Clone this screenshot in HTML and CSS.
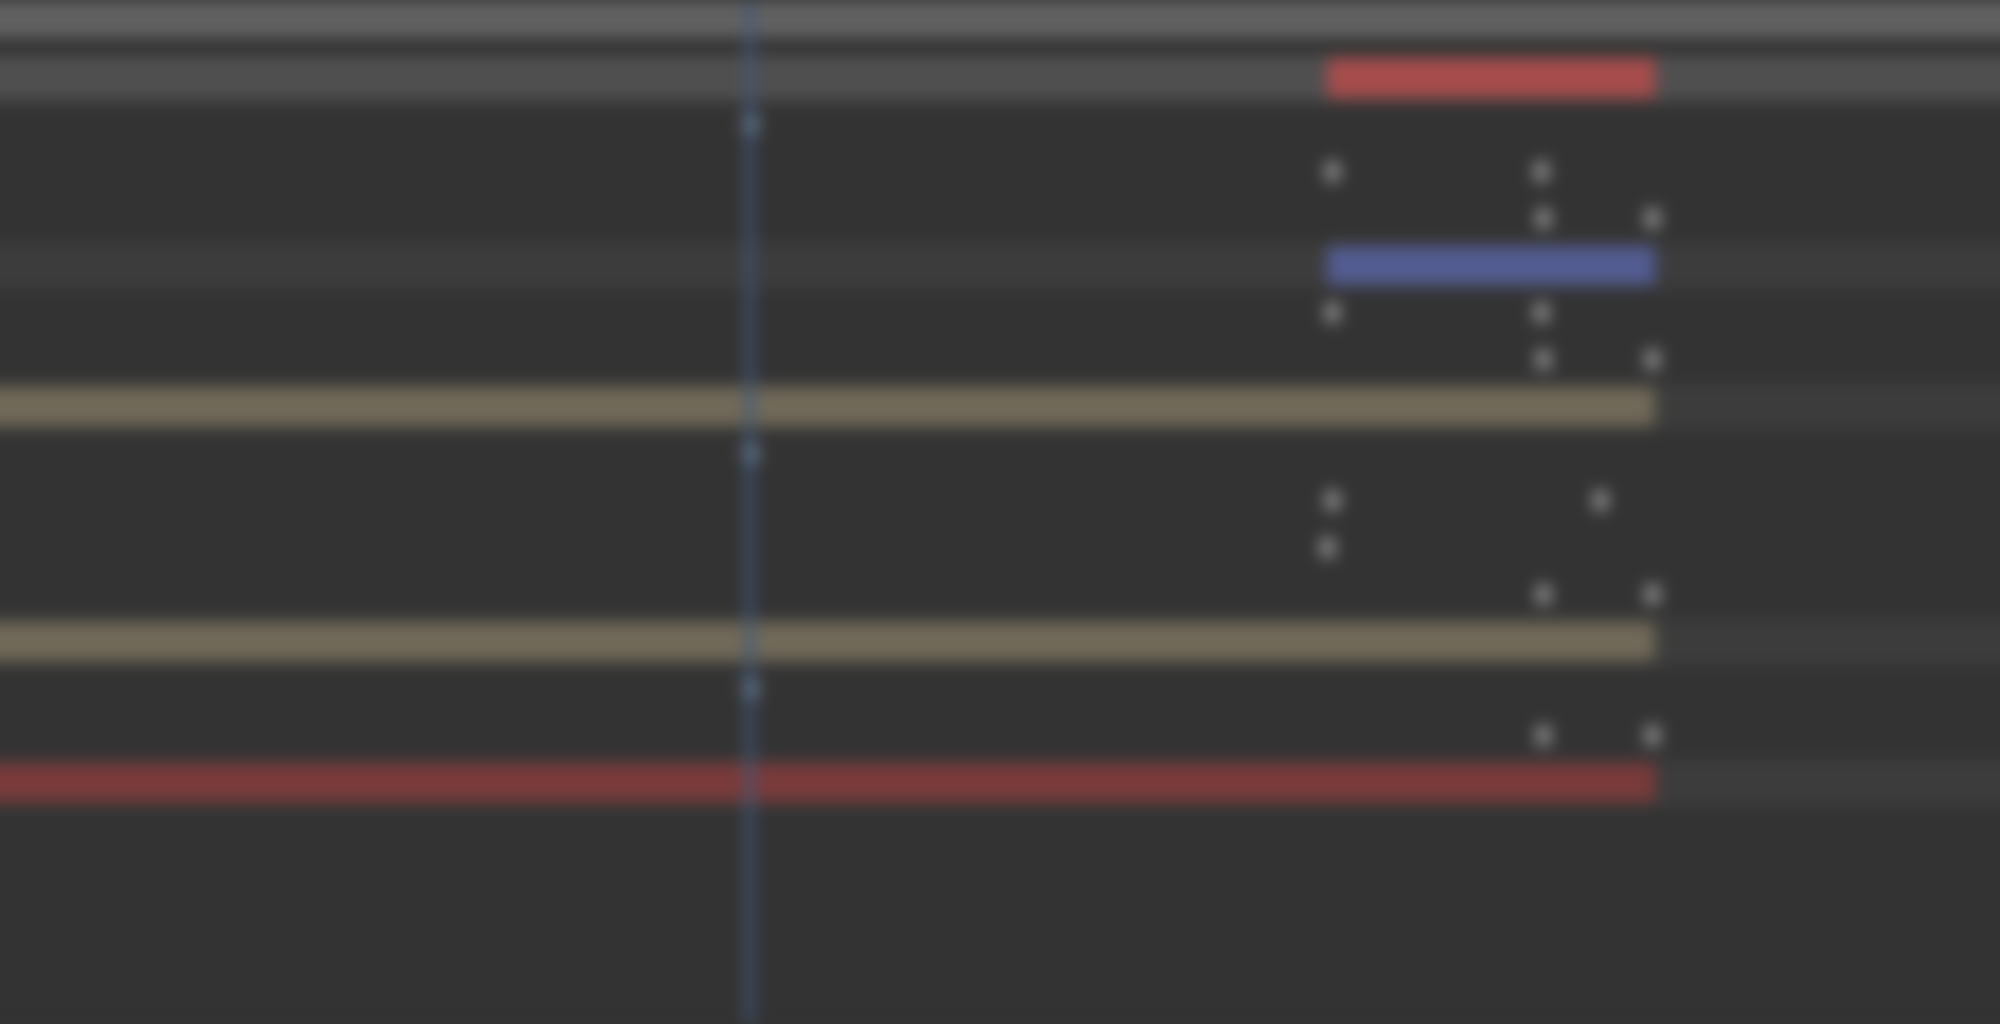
FILE: index.html
```html
<!DOCTYPE html>
<html>
<head>
<meta charset="utf-8">
<title>Timeline</title>
<link rel="stylesheet" href="styles.css">
</head>
<body>
<div class="timeline">
  <div class="ruler"></div>
  <div class="gap"></div>
  <div class="rows">
    <div class="row comp"><span class="bar red" style="left:1347px;width:328px"></span></div>
    <div class="row prop"><span class="kf dim" style="left:770px"></span></div>
    <div class="row prop"><span class="kf" style="left:1352px"></span><span class="kf" style="left:1561px"></span></div>
    <div class="row prop"><span class="kf" style="left:1563px"></span><span class="kf" style="left:1672px"></span></div>
    <div class="row layer"><span class="bar blue" style="left:1347px;width:328px"></span></div>
    <div class="row prop"><span class="kf" style="left:1352px"></span><span class="kf" style="left:1561px"></span></div>
    <div class="row prop"><span class="kf" style="left:1563px"></span><span class="kf" style="left:1672px"></span></div>
    <div class="row layer"><span class="bar tan" style="left:0;width:1675px"></span></div>
    <div class="row prop"><span class="kf dim" style="left:770px"></span></div>
    <div class="row prop"><span class="kf" style="left:1352px"></span><span class="kf" style="left:1620px"></span></div>
    <div class="row prop"><span class="kf" style="left:1347px"></span></div>
    <div class="row prop"><span class="kf" style="left:1563px"></span><span class="kf" style="left:1672px"></span></div>
    <div class="row layer"><span class="bar tan" style="left:0;width:1675px"></span></div>
    <div class="row prop"><span class="kf dim" style="left:770px"></span></div>
    <div class="row prop"><span class="kf" style="left:1563px"></span><span class="kf" style="left:1672px"></span></div>
    <div class="row layer"><span class="bar darkred" style="left:0;width:1675px"></span></div>
  </div>
  <div class="playhead"></div>
</div>
</body>
</html>
```

FILE: styles.css
```css
html, body {
  margin: 0;
  padding: 0;
  background: #333333;
  overflow: hidden;
  width: 2000px;
  height: 1024px;
}

.timeline {
  position: relative;
  width: 2060px;
  height: 1024px;
  margin-left: -20px;
  display: flex;
  flex-direction: column;
  background: #333333;
  filter: blur(8px);
}

.ruler {
  height: 38px;
  flex: none;
  background: #616161;
}

.gap {
  height: 17px;
  flex: none;
  background: #313131;
}

.rows {
  display: flex;
  flex-direction: column;
}

.row {
  position: relative;
  height: 47px;
  flex: none;
}

.row.comp {
  height: 46px;
  background: #4f4f4f;
}

.row.prop {
  background: #333333;
}

.row.layer {
  background: #3c3c3c;
}

.bar {
  position: absolute;
  top: 4px;
  height: 39px;
}

.row.comp .bar {
  top: 3px;
  height: 40px;
}

.bar.red { background: #a74c4c; }
.bar.blue { background: #535c91; }
.bar.tan { background: #716958; }
.bar.darkred { background: #7a3a3a; }

.kf {
  position: absolute;
  top: 13px;
  width: 15px;
  height: 21px;
  margin-left: -7px;
  border-radius: 6px;
  background: #8f8f8f;
}

.kf.dim {
  background: #8793a4;
}

.playhead {
  position: absolute;
  top: 0;
  bottom: 0;
  left: 766px;
  width: 7px;
  background: #405b7c;
}
```
